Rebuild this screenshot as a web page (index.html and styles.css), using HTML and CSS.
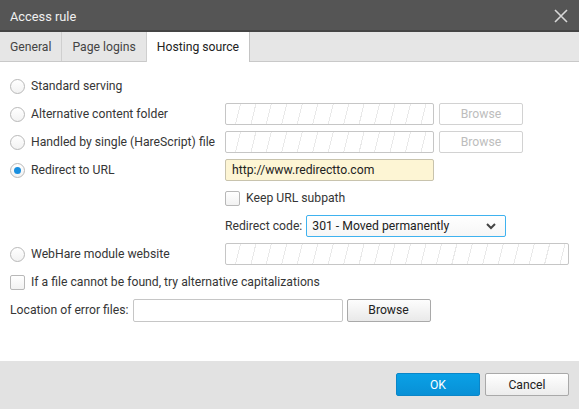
FILE: index.html
```html
<!DOCTYPE html>
<html>
<head>
<meta charset="utf-8">
<link rel="stylesheet" href="styles.css">
</head>
<body>
<div class="dialog">
  <div class="titlebar">
    <span class="title">Access rule</span>
    <svg class="close" width="14" height="14" viewBox="0 0 14 14"><path d="M1 1 L13 13 M13 1 L1 13" stroke="#d8d8d8" stroke-width="1.6" fill="none"/></svg>
  </div>
  <div class="tabs">
    <div class="tab">General</div>
    <div class="tab">Page logins</div>
    <div class="tab active">Hosting source</div>
  </div>
  <div class="content">
    <div class="grid">
      <label class="opt"><span class="radio"></span>Standard serving</label>
      <div></div>

      <label class="opt"><span class="radio"></span>Alternative content folder</label>
      <div class="ctl"><span class="input hatched"></span><span class="btn disabled">Browse</span></div>

      <label class="opt"><span class="radio"></span>Handled by single (HareScript) file</label>
      <div class="ctl"><span class="input hatched"></span><span class="btn disabled">Browse</span></div>

      <label class="opt"><span class="radio checked"></span>Redirect to URL</label>
      <div class="ctl"><span class="input url">http://www.redirectto.com</span></div>

      <div></div>
      <label class="opt"><span class="check"></span>Keep URL subpath</label>

      <div></div>
      <div class="ctl"><span class="lbl">Redirect code:</span><span class="select">301 - Moved permanently<svg class="chev" width="10" height="7" viewBox="0 0 10 7"><path d="M1 1 L5 5 L9 1" stroke="#444" stroke-width="2" fill="none"/></svg></span></div>

      <label class="opt"><span class="radio"></span>WebHare module website</label>
      <div class="ctl"><span class="input hatched wide"></span></div>

      <label class="opt span"><span class="check"></span>If a file cannot be found, try alternative capitalizations</label>

      <div class="ctl span"><span class="lbl">Location of error files:</span><span class="input errinput"></span><span class="btn">Browse</span></div>
    </div>
  </div>
  <div class="footer">
    <span class="fbtn ok">OK</span>
    <span class="fbtn cancel">Cancel</span>
  </div>
</div>
</body>
</html>
```

FILE: styles.css
```css
html, body {
  margin: 0;
  padding: 0;
}
body {
  font-family: Roboto, "Liberation Sans", sans-serif;
  font-size: 12.2px;
  color: #363636;
  background: #fff;
}
.dialog {
  width: 579px;
  height: 409px;
  display: flex;
  flex-direction: column;
  overflow: hidden;
}
.titlebar {
  height: 30px;
  background: #555555;
  border-bottom: 2px solid #454545;
  display: flex;
  align-items: center;
  justify-content: space-between;
  padding: 0 10px 0 10px;
  flex: none;
}
.title {
  color: #f0f0f0;
  font-size: 12.8px;
  margin-top: 2px;
}
.close {
  margin-right: 1px;
  margin-top: 1px;
}
.tabs {
  height: 29px;
  background: #e6e6e6;
  border-bottom: 1px solid #c9c9c9;
  display: flex;
  flex: none;
}
.tab {
  padding: 0 10px;
  display: flex;
  align-items: center;
  border-right: 1px solid #cfcfcf;
  color: #444;
}
.tab.active {
  background: #fff;
  color: #222;
  height: 30px;
  border-left: 1px solid #cfcfcf;
  margin-left: -1px;
  border-right: 1px solid #c4c4c4;
}
.content {
  flex: 1;
  padding: 13px 10px 0 10px;
}
.grid {
  display: grid;
  grid-template-columns: 215px 1fr;
  grid-auto-rows: 22px;
  row-gap: 6px;
}
.span {
  grid-column: 1 / 3;
}
.opt {
  display: flex;
  align-items: center;
  white-space: nowrap;
}
.radio {
  width: 13px;
  height: 13px;
  border: 1px solid #b8b8b8;
  border-radius: 50%;
  background: linear-gradient(#fff, #f2f2f2);
  margin-right: 6px;
  position: relative;
  flex: none;
}
.radio.checked::after {
  content: "";
  position: absolute;
  left: 3px;
  top: 3px;
  width: 7px;
  height: 7px;
  border-radius: 50%;
  background: #1a8fdf;
}
.check {
  width: 13px;
  height: 13px;
  border: 1px solid #b8b8b8;
  border-radius: 2px;
  background: linear-gradient(#fff, #f2f2f2);
  margin-right: 6px;
  flex: none;
}
.ctl {
  display: flex;
  align-items: center;
  gap: 5px;
}
.input {
  box-sizing: border-box;
  width: 209px;
  height: 22px;
  border: 1px solid #c6c6c6;
  border-radius: 2px;
  background: #fff;
  display: flex;
  align-items: center;
  padding: 0 6px;
  flex: none;
}
.hatched {
  background: repeating-linear-gradient(104deg, #fff 0 13.5px, #e9e9e9 13.5px 14.5px, #fff 14.5px 15px);
}
.input.wide {
  width: 344px;
}
.input.url {
  background: #fdf5d4;
  border-color: #c8c3ad;
  color: #222;
}
.input.errinput {
  width: 210px;
  height: 23px;
}
.btn {
  box-sizing: border-box;
  width: 84px;
  height: 22px;
  border: 1px solid #a9a9a9;
  border-radius: 2px;
  background: linear-gradient(#fdfdfd, #e9e9e9);
  display: flex;
  align-items: center;
  justify-content: center;
  color: #222;
  flex: none;
}
.ctl.span .btn {
  height: 23px;
  margin-left: -1px;
}
.btn.disabled {
  background: #fff;
  border-color: #d2d2d2;
  color: #bdbdbd;
}
.lbl {
  color: #363636;
  margin-right: -1px;
}
.select {
  box-sizing: border-box;
  width: 200px;
  height: 22px;
  border: 1px solid #3fb2ef;
  border-radius: 2px;
  background: linear-gradient(#fff, #f6f6f6);
  display: flex;
  align-items: center;
  justify-content: space-between;
  padding: 0 9px 0 5px;
  color: #222;
}
.footer {
  height: 48px;
  background: #e2e2e2;
  display: flex;
  justify-content: flex-end;
  align-items: flex-start;
  padding: 12px 10px 0 0;
  box-sizing: border-box;
  gap: 5px;
  flex: none;
}
.fbtn {
  box-sizing: border-box;
  width: 84px;
  height: 23px;
  border-radius: 2px;
  display: flex;
  align-items: center;
  justify-content: center;
}
.ok {
  background: linear-gradient(#0aa1e6, #0890d6);
  border: 1px solid #0a86c8;
  color: #fff;
}
.cancel {
  background: linear-gradient(#fff, #ececec);
  border: 1px solid #a9a9a9;
  color: #222;
}
```
